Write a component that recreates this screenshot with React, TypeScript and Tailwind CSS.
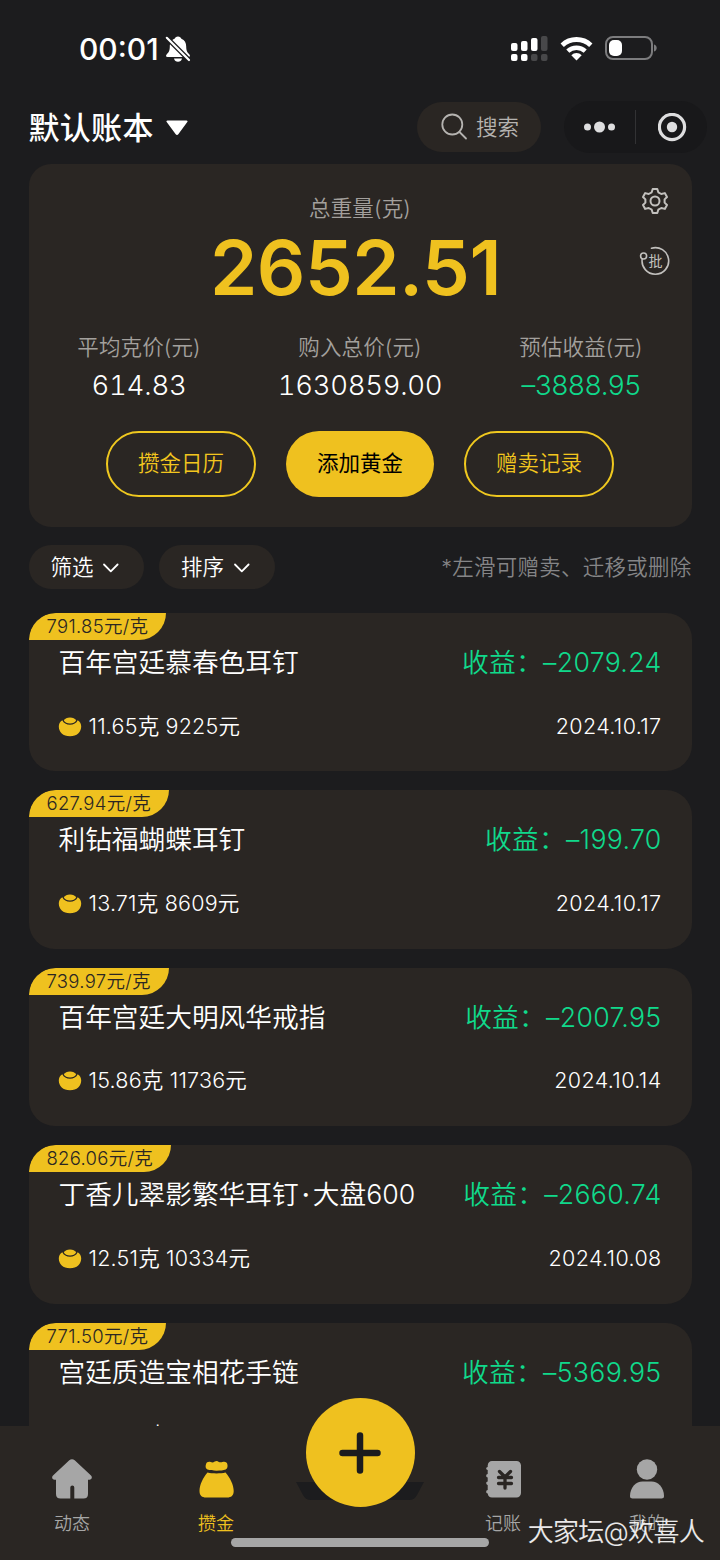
import type { ReactNode } from "react";

type Gold = {
  price: string;
  name: string;
  profit: string;
  weight: string;
  total: string;
  date: string;
};

const items: Gold[] = [
  { price: "791.85", name: "百年宫廷慕春色耳钉", profit: "–2079.24", weight: "11.65", total: "9225", date: "2024.10.17" },
  { price: "627.94", name: "利钻福蝴蝶耳钉", profit: "–199.70", weight: "13.71", total: "8609", date: "2024.10.17" },
  { price: "739.97", name: "百年宫廷大明风华戒指", profit: "–2007.95", weight: "15.86", total: "11736", date: "2024.10.14" },
  { price: "826.06", name: "丁香儿翠影繁华耳钉·大盘600", profit: "–2660.74", weight: "12.51", total: "10334", date: "2024.10.08" },
  { price: "771.50", name: "宫廷质造宝相花手链", profit: "–5369.95", weight: "33.96", total: "26200", date: "2024.10.08" },
];

function StatusBar() {
  return (
    <div className="flex h-[102px] shrink-0 items-start justify-between pt-[34px] pr-[63px] pl-[79px]">
      <div className="flex items-center gap-[6px]">
        <span className="text-[30px] leading-[30px] font-[550] tracking-[0px]">00:01</span>
        <svg width="26" height="28" viewBox="0 0 26 28" fill="none">
          <path
            d="M13 1.500c-1.800 0-3 1-3.400 2.300C6 5 4.800 8 4.800 11.500c0 4.500-1.300 6-3 7.700-1.300 1.400-.9 2.800.8 2.800h20.800c1.700 0 2.100-1.400.8-2.800-1.700-1.700-3-3.200-3-7.700 0-3.500-1.400-6.500-4.800-7.700C16 2.500 14.800 1.500 13 1.500zM9 23.500h8c-.5 2.200-2 3.300-4 3.300s-3.500-1.100-4-3.300z"
            fill="#fff"
          />
          <path d="M1.500 2.500l22.500 22.500" stroke="#1c1c1e" strokeWidth="4.600" />
          <path d="M1.800 2.800l22.200 22.200" stroke="#fff" strokeWidth="2.200" strokeLinecap="round" />
        </svg>
      </div>
      <div className="flex items-center pt-[1px]">
        <svg width="38" height="26" viewBox="0 0 38 26" fill="#fff">
          <rect x="1" y="8" width="6.500" height="8" rx="2" />
          <rect x="11" y="6" width="6.500" height="10" rx="2" />
          <rect x="21" y="3" width="6.500" height="13" rx="2" />
          <rect x="31" y="1" width="6.500" height="15" rx="2" fill="#48484a" />
          <rect x="1" y="19" width="6.500" height="7" rx="2" />
          <rect x="11" y="19" width="6.500" height="7" rx="2" />
          <rect x="21" y="19" width="6.500" height="7" rx="2" fill="#48484a" />
          <rect x="31" y="19" width="6.500" height="7" rx="2" fill="#48484a" />
        </svg>
        <svg className="ml-[12px]" width="33" height="25" viewBox="0 0 33 25" fill="none" stroke="#fff" strokeWidth="4.800">
          <path d="M2.200 9.200a20.800 20.800 0 0 1 28.600 0" />
          <path d="M7.800 15.200a12.600 12.600 0 0 1 17.400 0" strokeWidth="4.400" />
          <path d="M16.500 24.500l-5.200-5.200a7.200 7.200 0 0 1 10.400 0z" fill="#fff" stroke="none" />
        </svg>
        <svg className="ml-[12px]" width="52" height="26" viewBox="0 0 52 26" fill="none">
          <rect x="1" y="2" width="46" height="22" rx="7" stroke="#7c7c7e" strokeWidth="2" />
          <rect x="4" y="5" width="13" height="16" rx="5" fill="#fff" />
          <path d="M49 9.500c2 .6 2.700 2 2.700 3.500s-.7 2.900-2.700 3.500z" fill="#7c7c7e" />
        </svg>
      </div>
    </div>
  );
}

function Header() {
  return (
    <header className="flex h-[50px] shrink-0 items-center pr-[13px] pl-[28.500px]">
      <span className="pt-[2px] text-[31px] leading-[50px] font-medium tracking-[0.3px]">默认账本</span>
      <svg className="mt-[2px] ml-[11.500px]" width="24" height="18" viewBox="0 0 24 18" fill="#fff">
        <path d="M2.500 1.500h19c1 0 1.400.8.800 1.600l-9 12.200c-.6.900-2 .9-2.600 0l-9-12.200c-.6-.8-.2-1.600.8-1.600z" />
      </svg>
      <div className="ml-auto flex h-[50px] w-[124px] items-center rounded-full bg-[#2a2623] pl-[24px] text-[#b5b3b0]">
        <svg className="-mt-[2px]" width="27" height="27" viewBox="0 0 27 27" fill="none" stroke="currentColor" strokeWidth="1.800" strokeLinecap="round">
          <circle cx="11.300" cy="11.500" r="10" />
          <path d="M18.500 19l6.500 6.500" />
        </svg>
        <span className="ml-[8px] text-[21.500px] leading-[50px] font-[350]">搜索</span>
      </div>
      <div className="ml-[23px] flex h-[52px] w-[143px] items-center rounded-full bg-[#18181a] pl-[19px]">
        <svg width="32" height="14" viewBox="0 0 32 14" fill="#dededf">
          <circle cx="4.500" cy="7" r="3.500" />
          <circle cx="16.500" cy="7" r="5.500" />
          <circle cx="28.500" cy="7" r="3.500" />
        </svg>
        <div className="ml-[20px] h-[34px] w-px bg-[#323234]" />
        <svg className="ml-[22px]" width="29" height="29" viewBox="0 0 29 29" fill="none">
          <circle cx="14" cy="14" r="12.600" stroke="#dededf" strokeWidth="3.200" />
          <circle cx="14" cy="14" r="5.200" fill="#dededf" />
        </svg>
      </div>
    </header>
  );
}

function Stat({ label, children }: { label: string; children: ReactNode }) {
  return (
    <div className="flex w-[221px] flex-col items-center">
      <span className="text-[21.500px] leading-[34px] font-[350] tracking-[0.15px] text-[#a3a09d]">{label}</span>
      {children}
    </div>
  );
}

function Summary() {
  return (
    <section className="relative mx-[28.500px] mt-[12px] h-[363px] shrink-0 rounded-[22px] bg-[#2a2623]">
      <div className="flex flex-col items-center pt-[28px]">
        <span className="text-[21.500px] leading-[32px] font-[350] tracking-[0.150px] text-[#a3a09d]">总重量(克)</span>
        <span className="mt-[4px] mr-[9px] text-[76px] leading-[78px] font-[580] tracking-[-0.500px] text-[#efc11f]">2652.51</span>
      </div>
      <div className="mt-[24px] flex justify-center">
        <Stat label="平均克价(元)">
          <span className="mt-[3px] text-[27.500px] leading-[36px] font-light tracking-[-0.200px] tabular-nums">614.83</span>
        </Stat>
        <Stat label="购入总价(元)">
          <span className="mt-[3px] text-[27.500px] leading-[36px] font-light tracking-[-0.300px] tabular-nums">1630859.00</span>
        </Stat>
        <Stat label="预估收益(元)">
          <span className="mt-[3px] text-[27.500px] leading-[36px] font-light tracking-[-0.200px] text-[#10d98b]">–3888.95</span>
        </Stat>
      </div>
      <div className="mt-[28px] flex justify-center gap-[30px] text-[21.500px] font-[350] text-[#f3c61e]">
        <button className="h-[66px] w-[150px] rounded-full border-2 border-[#efc81f] pb-[2px]">攒金日历</button>
        <button className="h-[66px] w-[148px] rounded-full bg-[#efc11f] pb-[2px] font-normal text-black">添加黄金</button>
        <button className="h-[66px] w-[150px] rounded-full border-2 border-[#efc81f] pb-[2px]">赠卖记录</button>
      </div>
      <div className="absolute top-[22px] right-[21px] flex flex-col items-center gap-[30px] text-[#c2c0bd]">
        <svg width="30" height="30" viewBox="0 0 30 30" fill="none" stroke="currentColor" strokeWidth="2" strokeLinejoin="round">
          <path d="M12.700 3h4.600l1 3.300 3 1.700 3.500-.9 2.200 3.900-2.400 2.400v3.200l2.400 2.400-2.200 3.900-3.500-.9-3 1.700-1 3.300h-4.600l-1-3.300-3-1.700-3.500.9L3 19l2.400-2.400v-3.200L3 11l2.200-3.900 3.500.9 3-1.700z" />
          <circle cx="15" cy="15" r="4.500" />
        </svg>
        <svg className="-mt-px" width="32" height="32" viewBox="0 0 32 32" fill="none" stroke="currentColor" strokeWidth="1.600" strokeLinecap="round">
          <path d="M12.500 3.200A13.300 13.300 0 1 1 3.200 14" />
          <circle cx="4.600" cy="11" r="3" />
          <text x="16.500" y="21" textAnchor="middle" fontSize="14" fill="currentColor" stroke="none">批</text>
        </svg>
      </div>
    </section>
  );
}

function FilterPill({ label }: { label: string }) {
  return (
    <button className="flex h-[44px] w-[115.500px] items-center rounded-full bg-[#2a2623] pl-[22px]">
      <span className="text-[21.500px] leading-[44px] font-[350]">{label}</span>
      <svg className="mt-[2px] ml-[8.500px]" width="18" height="12" viewBox="0 0 18 12" fill="none" stroke="#fff" strokeWidth="1.800" strokeLinecap="round" strokeLinejoin="round">
        <path d="M2 2.500l6.800 6.800 6.800-6.800" />
      </svg>
    </button>
  );
}

function Ingot() {
  return (
    <svg className="mt-[2px] -ml-px" width="24" height="20" viewBox="0 0 24 20" fill="#efc11f">
      <path d="M4.300 3.300C1.800 4.800.8 7 .8 9.500.8 15 5 19.300 12 19.300s11.200-4.300 11.200-9.800c0-2.500-1-4.700-3.500-6.200C18.500 6.300 15.500 7.700 12 7.700S5.500 6.300 4.300 3.300z" />
      <path d="M5.800 3.600C7 1.800 9 .6 12 .6S17 1.800 18.200 3.600C17 5.500 15 6.600 12 6.600S7 5.500 5.800 3.600z" />
    </svg>
  );
}

function GoldCard({ item }: { item: Gold }) {
  const [name, suffix] = item.name.split("·");

  return (
    <li className="h-[158.400px] shrink-0 overflow-hidden rounded-[26px] bg-[#2a2623]">
      <div className="flex h-[27px] w-fit items-center rounded-tl-[27px] rounded-br-[27px] bg-[#efc11f] pr-[18px] pl-[18px] text-[18.500px] leading-[27px] font-[350] tracking-[0.300px] text-[#2a2623]">
        {item.price}元/克
      </div>
      <div className="flex justify-between px-[30px] text-[26.700px] leading-[44px] font-[350]">
        <span>
          {name}
          {suffix ? (
            <>
              <span className="mx-[3px] font-medium">·</span>
              {suffix}
            </>
          ) : null}
        </span>
        <span className="tracking-[0.300px] text-[#10d98b]">收益：{item.profit}</span>
      </div>
      <div className="mt-[23.500px] flex items-center px-[30px] text-[21.500px] leading-[36px] font-[350]">
        <Ingot />
        <span className="ml-[7px] tracking-[0.200px]">
          {item.weight}克 {item.total}元
        </span>
        <span className="ml-auto tracking-[0.350px]">{item.date}</span>
      </div>
    </li>
  );
}

function Tab({ label, active, children }: { label: string; active?: boolean; children: ReactNode }) {
  return (
    <div className={active ? "flex w-[144px] flex-col items-center text-[#efc11f]" : "flex w-[144px] flex-col items-center text-[#a6a6a6]"}>
      <svg width="42" height="42" viewBox="0 0 42 42" fill="currentColor">
        {children}
      </svg>
      <span className="mt-[11px] text-[18px] leading-[26px] font-[350]">{label}</span>
    </div>
  );
}

function TabBar() {
  return (
    <nav className="absolute inset-x-0 bottom-0 flex h-[134px] bg-[#2a2623] pt-[32px]">
      <Tab label="动态">
        <path d="M18.300 2.300c1.600-1.400 3.800-1.400 5.400 0L40 17.600c1.700 1.700.7 4.200-1.500 4.200H37V36c0 3-1.500 4.500-4.500 4.500H23.300V29.500a2 2 0 0 0-4 0v11H9.500C6.500 40.500 5 39 5 36V21.800H3.500C1.300 21.800.3 19.300 2 17.600z" />
      </Tab>
      <Tab label="攒金" active>
        <path d="M12.500 11.500c-2.200-1.500-2.200-3-1.500-5.300.6-2.200 2.700-2.800 4.700-2.100 1.500.6 2.800.4 4-.5 1.500-1 2.900-.7 4.100.3 1.200.6 2.400.6 3.700.1 2.500-.8 4.800.3 5 3 .2 2-.3 3.500-1.800 4.500-4.500 1.600-13.700 1.600-18.200 0zM12.500 14.500c5 1.200 13 1.200 18 0 4.500 5 8.200 12.500 8.200 18.500 0 4.500-2.500 6.500-6.500 6.500H11c-4 0-6.500-2-6.500-6.500 0-6 3.500-13.500 8-18.500z" />
      </Tab>
      <div className="w-[143px]" />
      <Tab label="记账">
        <path d="M10 3h24.500c2.500 0 4.500 2 4.500 4.500v27.500c0 2.500-2 4.500-4.500 4.500H10c-2.500 0-4-1.500-4.300-4-2 0-2-3.500 0-3.500v-5c-2-.5-2-3.500 0-3.500v-4c-2 0-2-3.500 0-3.500v-4c-2 0-2-3 0-3V7.500C6 4.500 7.500 3 10 3z" />
        <path d="M17.500 13.500l5.500 5.500 5.500-5.500M16.500 19.500h13M16.500 25.500h13M23 20v10" fill="none" stroke="#2a2623" strokeWidth="3.300" strokeLinecap="round" />
      </Tab>
      <Tab label="我的">
        <circle cx="21" cy="11.500" r="10.200" />
        <path d="M4 38c0-8.500 6-14.500 12.500-14.500h9C32 23.500 38 29.500 38 38c0 1.800-1 2.500-2.500 2.500h-29C5 40.500 4 39.800 4 38z" />
      </Tab>
      <svg className="absolute top-[56px] left-[296px]" width="128" height="18" viewBox="0 0 128 18" fill="#1c1c1e">
        <path d="M0 0h128l-7 13c-1.500 3-4 5-8 5H15c-4 0-6.500-2-8-5z" />
      </svg>
      <button className="absolute top-[-28px] left-[306px] flex size-[109px] items-center justify-center rounded-full bg-[#efc11f]">
        <svg className="-ml-px" width="42" height="42" viewBox="0 0 42 42" stroke="#1c1c1e" strokeWidth="6.500" strokeLinecap="round">
          <path d="M21 3.500v35M3.500 21h35" />
        </svg>
      </button>
      <div className="absolute top-[112px] left-[231px] h-[9px] w-[258px] rounded-full bg-[#a6a6a6]" />
      <span className="absolute top-[87px] right-[16px] text-[26px] leading-[38px] font-[350] tracking-[-0.700px] text-white/90">大家坛@欢喜人</span>
    </nav>
  );
}

export default function App() {
  return (
    <main className="relative flex h-[1560px] w-[720px] flex-col overflow-hidden bg-[#1c1c1e] font-['Inter','Noto_Sans_CJK_SC',sans-serif] text-white">
      <StatusBar />
      <Header />
      <Summary />
      <div className="mt-[18px] flex shrink-0 items-center gap-[15px] px-[28.500px]">
        <FilterPill label="筛选" />
        <FilterPill label="排序" />
        <span className="ml-auto text-[21.500px] font-[350] tracking-[0.250px] text-[#858587]">*左滑可赠卖、迁移或删除</span>
      </div>
      <ul className="mx-[28.500px] mt-[24px] flex flex-col gap-[19px]">
        {items.map((item) => (
          <GoldCard key={item.price} item={item} />
        ))}
      </ul>
      <TabBar />
    </main>
  );
}
